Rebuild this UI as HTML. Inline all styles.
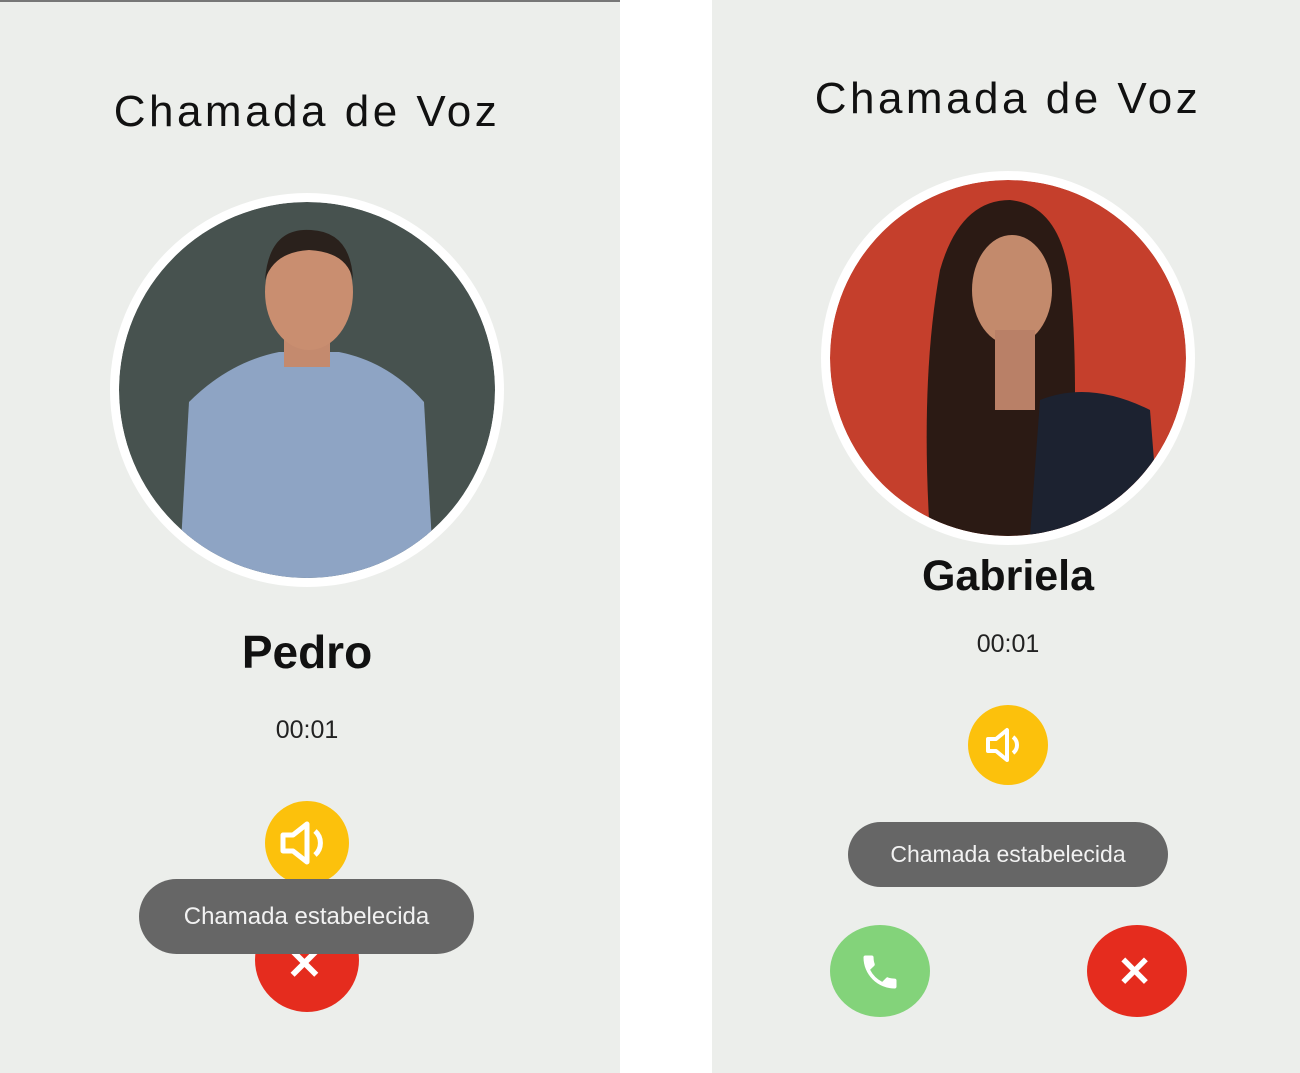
<!DOCTYPE html>
<html><head><meta charset="utf-8"><style>
body{margin:0;width:1300px;height:1073px;background:#fff;position:relative;overflow:hidden;font-family:"Liberation Sans",sans-serif}
.p{position:absolute;top:0;height:1073px;background:#eceeeb}
.t{position:absolute;text-align:center;color:#111;font-size:44px;letter-spacing:3.5px}
.n{position:absolute;text-align:center;font-weight:bold;color:#111}
.tm{position:absolute;text-align:center;color:#222;font-size:25px}
.c{position:absolute;border-radius:50%}
.toast{position:absolute;background:#666;color:#f2f2f2;border-radius:40px;text-align:center;font-size:24px}
</style></head><body>
<div class="p" style="left:0;width:620px;border-top:2px solid #777;box-sizing:border-box"></div>
<div class="p" style="left:712px;width:588px"></div>

<div class="t" style="left:0;width:614px;top:87px">Chamada de Voz</div>
<div class="c" style="left:110px;top:193px;width:394px;height:394px;background:#fff"></div>
<svg class="c" style="left:119px;top:202px" width="376" height="376" viewBox="0 0 376 376">
<defs><clipPath id="a"><circle cx="188" cy="188" r="188"/></clipPath></defs>
<g clip-path="url(#a)"><rect width="376" height="376" fill="#47524f"/>
<path d="M60 376 L70 200 Q110 160 160 150 L220 150 Q270 160 305 200 L315 376Z" fill="#8ea4c4"/>
<rect x="165" y="120" width="46" height="45" fill="#c48a6e"/>
<ellipse cx="190" cy="90" rx="44" ry="58" fill="#c98e70"/>
<path d="M146 78 Q150 25 192 28 Q232 30 234 78 Q228 50 190 48 Q155 50 146 78Z" fill="#2a211c"/></g></svg>
<div class="n" style="left:0;width:614px;top:625px;font-size:46px">Pedro</div>
<div class="tm" style="left:0;width:614px;top:716px">00:01</div>
<div class="c" style="left:265px;top:801px;width:84px;height:84px;background:#fcc10c"></div>
<div class="c" style="left:255px;top:908px;width:104px;height:104px;background:#e52c1e"></div>
<div style="position:absolute;left:286px;top:950px;color:#fff;font-size:44px;font-weight:bold;line-height:30px">✕</div>
<svg style="position:absolute;left:279px;top:821px" width="56" height="44" viewBox="0 0 56 44"><path d="M4 14h10l14-11v38L14 30H4z" fill="none" stroke="#fff" stroke-width="5" stroke-linejoin="round"/><path d="M36 10a16 16 0 0 1 0 24" fill="none" stroke="#fff" stroke-width="5"/></svg>
<div class="toast" style="left:139px;top:879px;width:335px;height:75px;line-height:75px">Chamada estabelecida</div>

<div class="t" style="left:712px;width:592px;top:74px">Chamada de Voz</div>
<div class="c" style="left:821px;top:171px;width:374px;height:374px;background:#fff"></div>
<svg class="c" style="left:830px;top:180px" width="356" height="356" viewBox="0 0 356 356">
<defs><clipPath id="b"><circle cx="178" cy="178" r="178"/></clipPath></defs>
<g clip-path="url(#b)"><rect width="356" height="356" fill="#c53f2c"/>
<path d="M100 356 Q90 200 110 90 Q130 20 180 20 Q230 25 240 100 Q250 200 240 356Z" fill="#2b1a14"/>
<path d="M200 356 L210 220 Q260 200 320 230 L330 356Z" fill="#1c2230"/>
<ellipse cx="182" cy="110" rx="40" ry="55" fill="#c38a6c"/>
<rect x="165" y="150" width="40" height="80" fill="#b98067"/></g></svg>
<div class="n" style="left:712px;width:592px;top:552px;font-size:43px">Gabriela</div>
<div class="tm" style="left:712px;width:592px;top:630px">00:01</div>
<div class="c" style="left:968px;top:705px;width:80px;height:80px;background:#fcc10c"></div>
<svg style="position:absolute;left:985px;top:727px" width="44" height="36" viewBox="0 0 44 36"><path d="M3 12h8l11-9v30L11 24H3z" fill="none" stroke="#fff" stroke-width="4" stroke-linejoin="round"/><path d="M28 10a10 10 0 0 1 0 16" fill="none" stroke="#fff" stroke-width="4"/></svg>
<div class="toast" style="left:848px;top:822px;width:320px;height:65px;line-height:65px;font-size:23px">Chamada estabelecida</div>
<div class="c" style="left:830px;top:925px;width:100px;height:92px;background:#83d37a"></div>
<svg style="position:absolute;left:858px;top:950px" width="44" height="44" viewBox="0 0 24 24"><path d="M6.6 10.8a15 15 0 0 0 6.6 6.6l2.2-2.2c.3-.3.7-.4 1-.2 1.1.4 2.3.6 3.6.6.6 0 1 .4 1 1V20c0 .6-.4 1-1 1A17 17 0 0 1 3 4c0-.6.4-1 1-1h3.5c.6 0 1 .4 1 1 0 1.3.2 2.5.6 3.6.1.3 0 .7-.2 1z" fill="#fff"/></svg>
<div class="c" style="left:1087px;top:925px;width:100px;height:92px;background:#e52c1e"></div>
<div style="position:absolute;left:1117px;top:957px;color:#fff;font-size:42px;font-weight:bold;line-height:30px">✕</div>
</body></html>
